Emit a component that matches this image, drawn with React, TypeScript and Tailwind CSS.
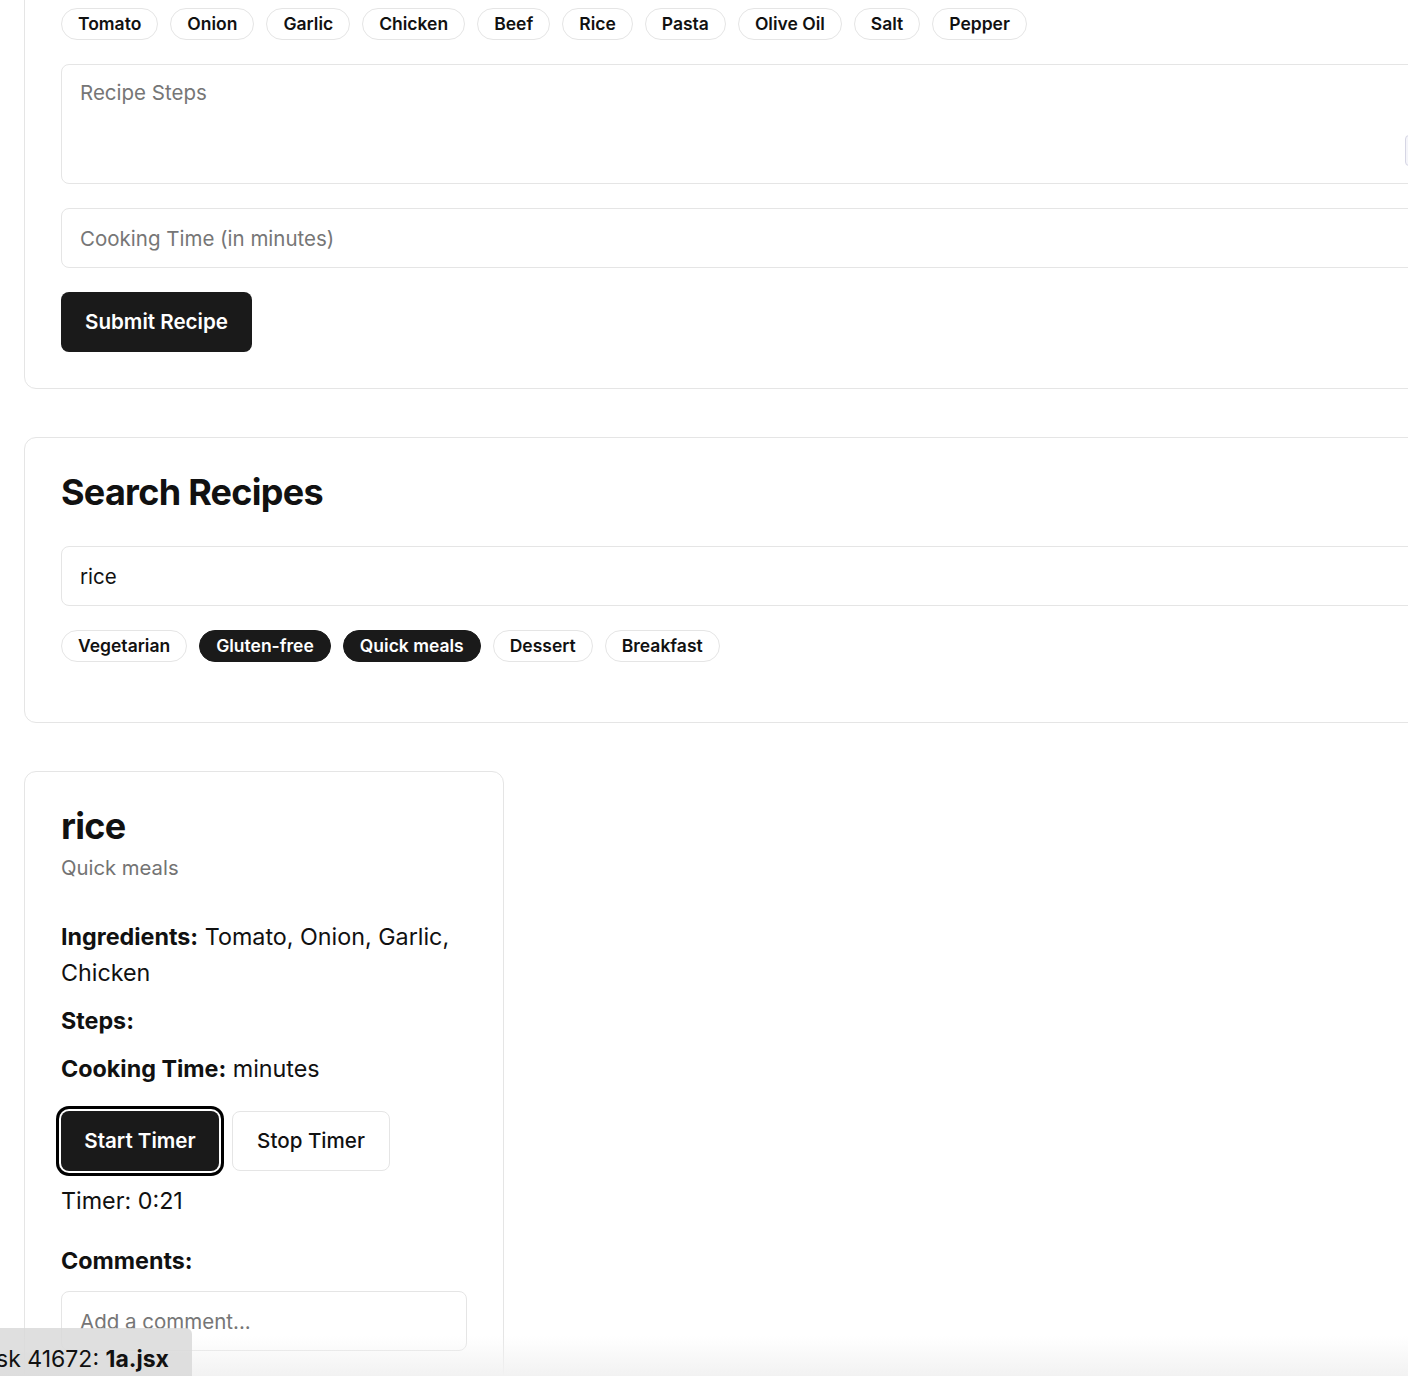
import React, { useState } from 'react';

const ingredientOptions = [
  'Tomato',
  'Onion',
  'Garlic',
  'Chicken',
  'Beef',
  'Rice',
  'Pasta',
  'Olive Oil',
  'Salt',
  'Pepper',
];

const categoryOptions = ['Vegetarian', 'Gluten-free', 'Quick meals', 'Dessert', 'Breakfast'];

interface Recipe {
  id: string;
  name: string;
  category: string;
  ingredients: string[];
  steps: string;
  time: string;
  comments: string[];
}

const recipes: Recipe[] = [
  {
    id: 'r-1',
    name: 'rice',
    category: 'Quick meals',
    ingredients: ['Tomato', 'Onion', 'Garlic', 'Chicken'],
    steps: '',
    time: '',
    comments: [],
  },
];

const Chip: React.FC<{ label: string; active?: boolean; onClick?: () => void }> = ({
  label,
  active,
  onClick,
}) => (
  <button
    onClick={onClick}
    className={`h-8 rounded-full border px-4 text-[17.5px] font-semibold leading-[30px] ${
      active ? 'border-[#1a1a1a] bg-[#1a1a1a] text-white' : 'border-[#e5e5e5] bg-white text-[#111]'
    }`}
  >
    {label}
  </button>
);

const fieldClass =
  'w-full rounded-lg border border-[#e5e5e5] bg-white px-[18px] text-[20.5px] text-[#111] placeholder:text-[#767676] outline-none';

const App: React.FC = () => {
  const [search, setSearch] = useState('rice');
  const [picked, setPicked] = useState<string[]>([]);
  const [filters, setFilters] = useState<string[]>(['Gluten-free', 'Quick meals']);
  const [seconds, setSeconds] = useState(21);
  const [comment, setComment] = useState('');

  const toggle = (list: string[], value: string) =>
    list.includes(value) ? list.filter((v) => v !== value) : [...list, value];

  const mins = Math.floor(seconds / 60);
  const secs = String(seconds % 60).padStart(2, '0');

  return (
    <div
      className="relative h-[1376px] w-full overflow-hidden bg-white text-[#111]"
      style={{ fontFamily: 'Inter, "Noto Sans", sans-serif' }}
    >
      <div className="w-[1520px] px-6">
        {/* add recipe form (scrolled partly out of view) */}
        <div className="-mt-[29px] rounded-xl border border-[#e5e5e5] bg-white p-9">
          <div className="flex flex-wrap gap-3">
            {ingredientOptions.map((name) => (
              <Chip
                key={name}
                label={name}
                active={picked.includes(name)}
                onClick={() => setPicked(toggle(picked, name))}
              />
            ))}
          </div>
          <textarea
            placeholder="Recipe Steps"
            className={`${fieldClass} mt-6 block h-[120px] py-[13px] leading-[30px]`}
          />
          <input
            type="text"
            placeholder="Cooking Time (in minutes)"
            className={`${fieldClass} mt-6 block h-[60px]`}
          />
          <button className="mt-6 h-[60px] rounded-lg bg-[#1a1a1a] px-6 text-[20.6px] font-semibold text-white">
            Submit Recipe
          </button>
        </div>

        {/* search */}
        <div className="mt-12 rounded-xl border border-[#e5e5e5] bg-white px-9 pb-[60px] pt-9">
          <h2 className="mb-9 text-[36px] font-bold leading-[36px] tracking-[-0.02em]">Search Recipes</h2>
          <input
            type="text"
            value={search}
            onChange={(e) => setSearch(e.target.value)}
            placeholder="Search by name or ingredient"
            className={`${fieldClass} block h-[60px]`}
          />
          <div className="mt-6 flex flex-wrap gap-3">
            {categoryOptions.map((c) => (
              <Chip
                key={c}
                label={c}
                active={filters.includes(c)}
                onClick={() => setFilters(toggle(filters, c))}
              />
            ))}
          </div>
        </div>

        {/* results */}
        <div className="mt-12 grid grid-cols-[480px] gap-6">
          {recipes.map((r) => (
            <div key={r.id} className="rounded-xl border border-[#e5e5e5] bg-white p-9">
              <h3 className="text-[36px] font-bold leading-[36px] tracking-[-0.02em]">{r.name}</h3>
              <p className="mt-[9px] text-[20.3px] leading-[30px] text-[#737373]">{r.category}</p>

              <div className="mt-9 space-y-3 text-[23.3px] leading-[36px]">
                <p>
                  <strong className="font-bold">Ingredients:</strong> {r.ingredients.join(', ')}
                </p>
                <p>
                  <strong className="font-bold">Steps:</strong> {r.steps}
                </p>
                <p>
                  <strong className="font-bold">Cooking Time:</strong> {r.time} minutes
                </p>
              </div>

              <div className="mt-6 flex gap-[13px]">
                <button
                  onClick={() => setSeconds(seconds + 1)}
                  className="h-[60px] w-[158px] rounded-lg bg-[#1a1a1a] text-[20.6px] font-semibold text-white ring-[3px] ring-black ring-offset-2"
                >
                  Start Timer
                </button>
                <button
                  onClick={() => setSeconds(0)}
                  className="h-[60px] w-[158px] rounded-lg border border-[#e5e5e5] bg-white text-[20.6px] font-medium text-[#111]"
                >
                  Stop Timer
                </button>
              </div>
              <p className="mt-3 text-[23.3px] leading-[36px]">
                Timer: {mins}:{secs}
              </p>

              <h4 className="mt-6 text-[23.3px] font-bold leading-[36px]">Comments:</h4>
              {r.comments.map((c, i) => (
                <p key={i} className="text-[20px]">
                  {c}
                </p>
              ))}
              <input
                type="text"
                value={comment}
                onChange={(e) => setComment(e.target.value)}
                placeholder="Add a comment..."
                className={`${fieldClass} mt-3 block h-[60px]`}
              />
            </div>
          ))}
        </div>
      </div>

      {/* small widget peeking in at the right edge of the steps box */}
      <div className="absolute left-[1405px] top-[135px] h-[31px] w-8 rounded-[4px] border border-[#d6d6e4] bg-[#f5f5fa]" />

      {/* bottom fade + file label */}
      <div className="pointer-events-none absolute inset-x-0 bottom-0 h-10 bg-linear-to-b from-white/0 to-[#f2f2f2]" />
      <div className="absolute bottom-0 left-0 h-12 w-[192px] overflow-hidden rounded-tr-md bg-[#d9d9d9]/85 pt-[18px] text-[23px] leading-[26px] whitespace-nowrap">
        <span className="-ml-[30px] inline-block">
          Task 41672: <strong className="font-bold">1a.jsx</strong>
        </span>
      </div>
    </div>
  );
};

export default App;
